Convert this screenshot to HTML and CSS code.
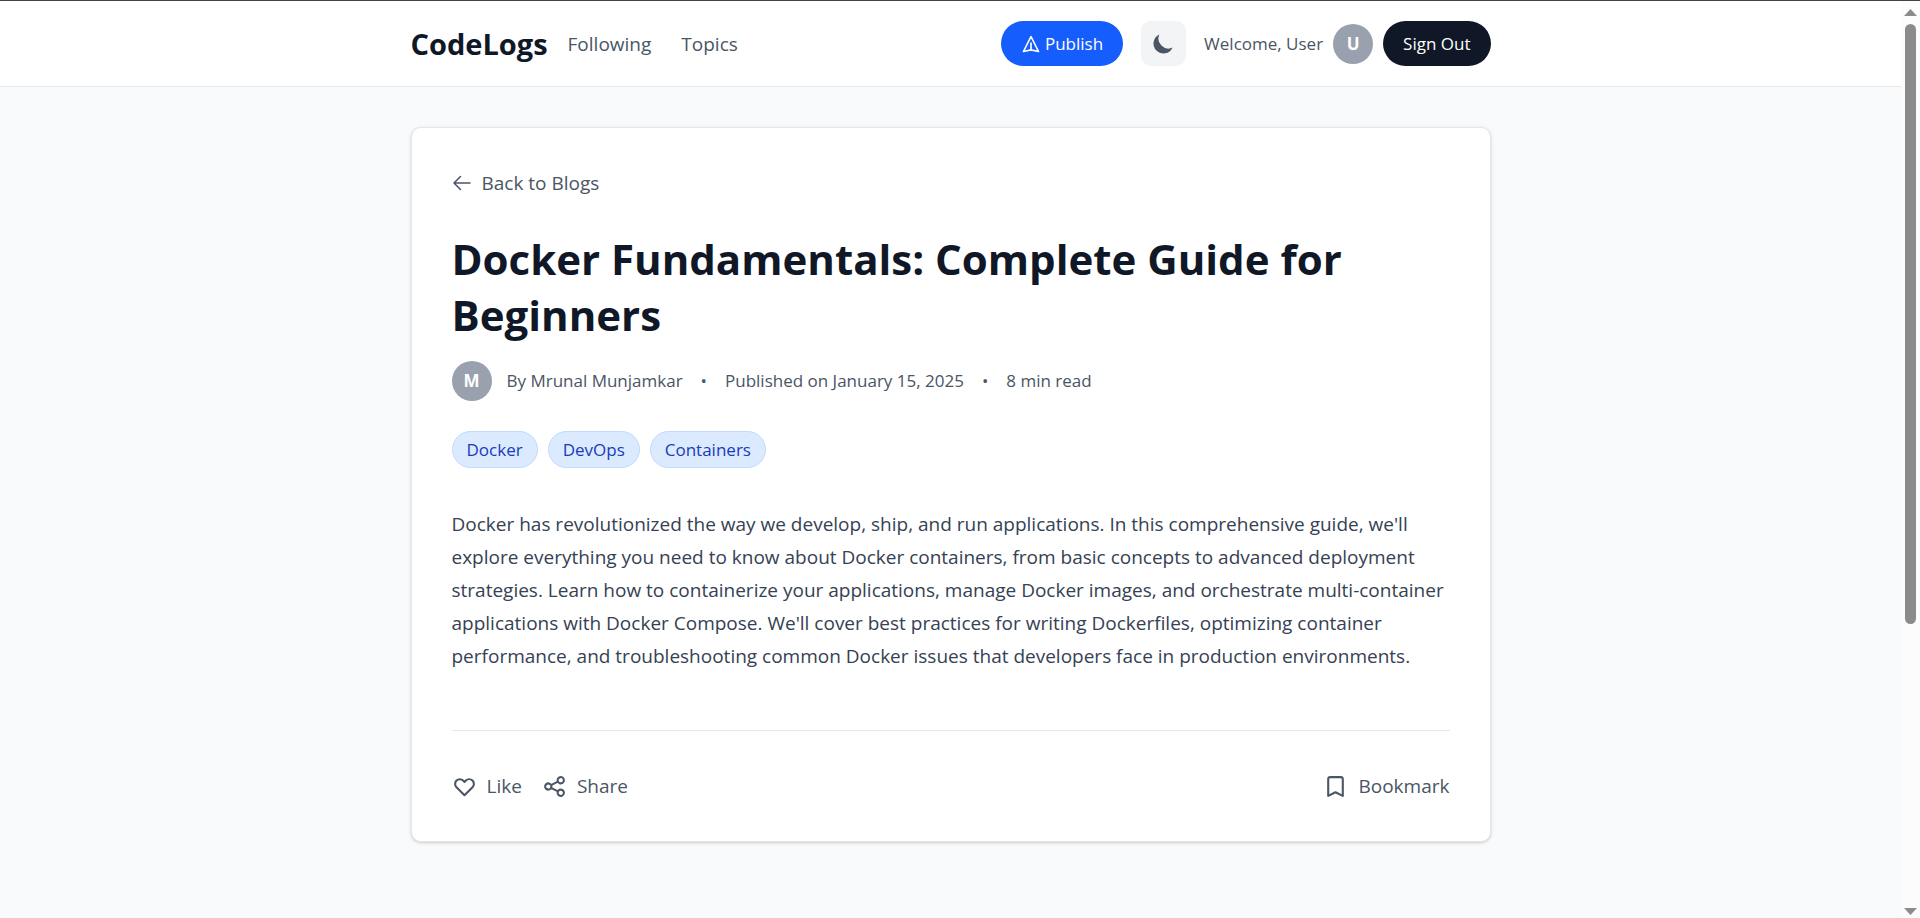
FILE: index.html
```html
<!DOCTYPE html>
<html lang="en">
<head>
<meta charset="utf-8">
<meta name="viewport" content="width=device-width, initial-scale=1">
<title>Docker Fundamentals - CodeLogs</title>
<link rel="stylesheet" href="styles.css">
</head>
<body>
<div class="shell">
  <div class="page">
    <header class="site-header">
      <div class="container header-row">
        <nav class="nav">
          <a class="logo" href="#">CodeLogs</a>
          <a class="nav-link" href="#">Following</a>
          <a class="nav-link" href="#">Topics</a>
        </nav>
        <div class="actions">
          <button class="btn btn-primary" type="button">
            <svg class="icon-publish" viewBox="0 0 24 24" aria-hidden="true"><path d="m12 19 9 2-9-18-9 18 9-2zm0 0v-8"/></svg>
            Publish
          </button>
          <button class="theme-toggle" type="button" aria-label="Toggle dark mode">
            <svg class="icon-moon" viewBox="0 0 20 20" aria-hidden="true"><path d="M17.293 13.293A8 8 0 0 1 6.707 2.707a8.001 8.001 0 1 0 10.586 10.586z"/></svg>
          </button>
          <div class="user">
            <span class="welcome">Welcome, User</span>
            <span class="avatar">U</span>
            <button class="btn btn-dark" type="button">Sign Out</button>
          </div>
        </div>
      </div>
    </header>
    <main class="container main">
      <article class="card">
        <a class="back" href="#">
          <svg class="icon-back" viewBox="0 0 20 20" aria-hidden="true"><path d="M18 10H2M8.500 3.500 2 10l6.500 6.500"/></svg>
          Back to Blogs
        </a>
        <h1 class="title">Docker Fundamentals: Complete Guide for Beginners</h1>
        <div class="meta">
          <span class="byline"><span class="avatar">M</span> By Mrunal Munjamkar</span>
          <span class="dot">•</span>
          <span>Published on January 15, 2025</span>
          <span class="dot">•</span>
          <span>8 min read</span>
        </div>
        <div class="tags">
          <span class="tag">Docker</span>
          <span class="tag">DevOps</span>
          <span class="tag">Containers</span>
        </div>
        <p class="body-text">Docker has revolutionized the way we develop, ship, and run applications. In this comprehensive guide, we'll explore everything you need to know about Docker containers, from basic concepts to advanced deployment strategies. Learn how to containerize your applications, manage Docker images, and orchestrate multi-container applications with Docker Compose. We'll cover best practices for writing Dockerfiles, optimizing container performance, and troubleshooting common Docker issues that developers face in production environments.</p>
        <footer class="card-footer">
          <div class="footer-group">
            <button class="action" type="button">
              <svg class="icon" viewBox="0 0 24 24" aria-hidden="true"><path d="M4.318 6.318a4.500 4.500 0 0 0 0 6.364L12 20.364l7.682-7.682a4.500 4.500 0 0 0-6.364-6.364L12 7.636l-1.318-1.318a4.500 4.500 0 0 0-6.364 0z"/></svg>
              Like
            </button>
            <button class="action" type="button">
              <svg class="icon" viewBox="0 0 24 24" aria-hidden="true"><path d="M8.684 13.342C8.886 12.938 9 12.482 9 12c0-.482-.114-.938-.316-1.342m0 2.684a3 3 0 1 1 0-2.684m0 2.684 6.632 3.316m-6.632-6 6.632-3.316m0 0a3 3 0 1 0 5.367-2.684 3 3 0 0 0-5.367 2.684zm0 9.316a3 3 0 1 0 5.368 2.684 3 3 0 0 0-5.368-2.684z"/></svg>
              Share
            </button>
          </div>
          <button class="action" type="button">
            <svg class="icon" viewBox="0 0 24 24" aria-hidden="true"><path d="M5 5a2 2 0 0 1 2-2h10a2 2 0 0 1 2 2v16l-7-3.500L5 21V5z"/></svg>
            Bookmark
          </button>
        </footer>
      </article>
    </main>
  </div>
  <div class="scrollbar" aria-hidden="true">
    <svg class="arrow" viewBox="0 0 13 7"><path d="M6.500 0 13 7H0z"/></svg>
    <div class="track"><div class="thumb"></div></div>
    <svg class="arrow" viewBox="0 0 13 7"><path d="M0 0h13L6.500 7z"/></svg>
  </div>
</div>
</body>
</html>
```
FILE: styles.css
```css
* { box-sizing: border-box; }

body {
  margin: 0;
  background: #f9fafb;
  color: #4a5565;
  font-family: "Segoe UI", "Open Sans", "Noto Sans", sans-serif;
  font-size: 19px;
  line-height: 30px;
}

a { color: inherit; text-decoration: none; }

button {
  border: 0;
  padding: 0;
  background: none;
  color: inherit;
  font: inherit;
  cursor: pointer;
}

.shell {
  display: grid;
  grid-template-columns: minmax(0, 1fr) 19px;
  height: 100vh;
  border-top: 1px solid #434244;
}

.page { overflow: hidden; background: #f9fafc; }

.container {
  width: 100%;
  max-width: 1080px;
  margin: 0 auto;
}

.site-header {
  padding: 20px 0;
  background: #fff;
  border-bottom: 1px solid #e5e7eb;
}

.header-row,
.nav,
.actions,
.user,
.meta,
.byline,
.footer-group,
.card-footer {
  display: flex;
  align-items: center;
}

.header-row { justify-content: space-between; }

.logo {
  margin-right: 20px;
  color: #101828;
  font-size: 29px;
  font-weight: 700;
}

.nav-link { margin-right: 30px; }

.actions { gap: 18px; font-size: 17px; }

.user { gap: 10px; }

.btn {
  display: flex;
  align-items: center;
  gap: 4px;
  height: 45px;
  padding: 0 20px;
  border-radius: 23px;
  color: #fff;
}

.btn-primary { background: #155dfc; }
.btn-dark { background: #101828; }

.icon-publish {
  width: 20px;
  height: 20px;
  fill: none;
  stroke: currentColor;
  stroke-width: 2;
  stroke-linecap: round;
  stroke-linejoin: round;
}

.theme-toggle {
  display: grid;
  place-items: center;
  width: 45px;
  height: 45px;
  border-radius: 10px;
  background: #f3f4f6;
}

.icon-moon { width: 25px; height: 25px; fill: #4a5565; }

.avatar {
  display: grid;
  place-items: center;
  width: 40px;
  height: 40px;
  border-radius: 50%;
  background: #99a1af;
  color: #fff;
  font-size: 17px;
  font-weight: 700;
}

.main { padding: 40px 0; }

.card {
  padding: 40px;
  border: 1px solid #e5e7eb;
  border-radius: 10px;
  background: #fff;
  box-shadow: 0 1px 4px rgba(0, 0, 0, 0.1), 0 1px 2px rgba(0, 0, 0, 0.1);
}

.back { display: inline-flex; align-items: center; gap: 10px; }

.icon-back {
  width: 20px;
  height: 20px;
  fill: none;
  stroke: currentColor;
  stroke-width: 1.5;
  stroke-linecap: round;
  stroke-linejoin: round;
}

.title {
  margin: 30px 0 18px;
  color: #101828;
  font-size: 42px;
  font-weight: 700;
  line-height: 56px;
}

.meta { gap: 18px; font-size: 17px; }
.byline { gap: 15px; }

.tags { display: flex; gap: 10px; margin-top: 30px; }

.tag {
  padding: 5px 14px;
  border: 1px solid #bedbff;
  border-radius: 19px;
  background: #dbeafe;
  color: #193cb8;
  font-size: 17px;
  line-height: 25px;
}

.body-text {
  margin: 40px 0 57px;
  color: #364153;
  line-height: 33px;
}

.card-footer {
  justify-content: space-between;
  padding-top: 40px;
  border-top: 1px solid #e5e7eb;
}

.footer-group { gap: 20px; }

.action { display: flex; align-items: center; gap: 10px; }

.icon {
  width: 25px;
  height: 25px;
  fill: none;
  stroke: currentColor;
  stroke-width: 2;
  stroke-linecap: round;
  stroke-linejoin: round;
}

.scrollbar {
  display: flex;
  flex-direction: column;
  align-items: center;
  gap: 8px;
  padding: 8px 0 3px;
  background: #fcfcfc;
}

.arrow { display: block; width: 13px; height: 7px; fill: #8b8b8b; }

.track { flex: 1; }

.thumb {
  width: 11px;
  height: 68.500%;
  border-radius: 6px;
  background: #8b8b8b;
}
```
